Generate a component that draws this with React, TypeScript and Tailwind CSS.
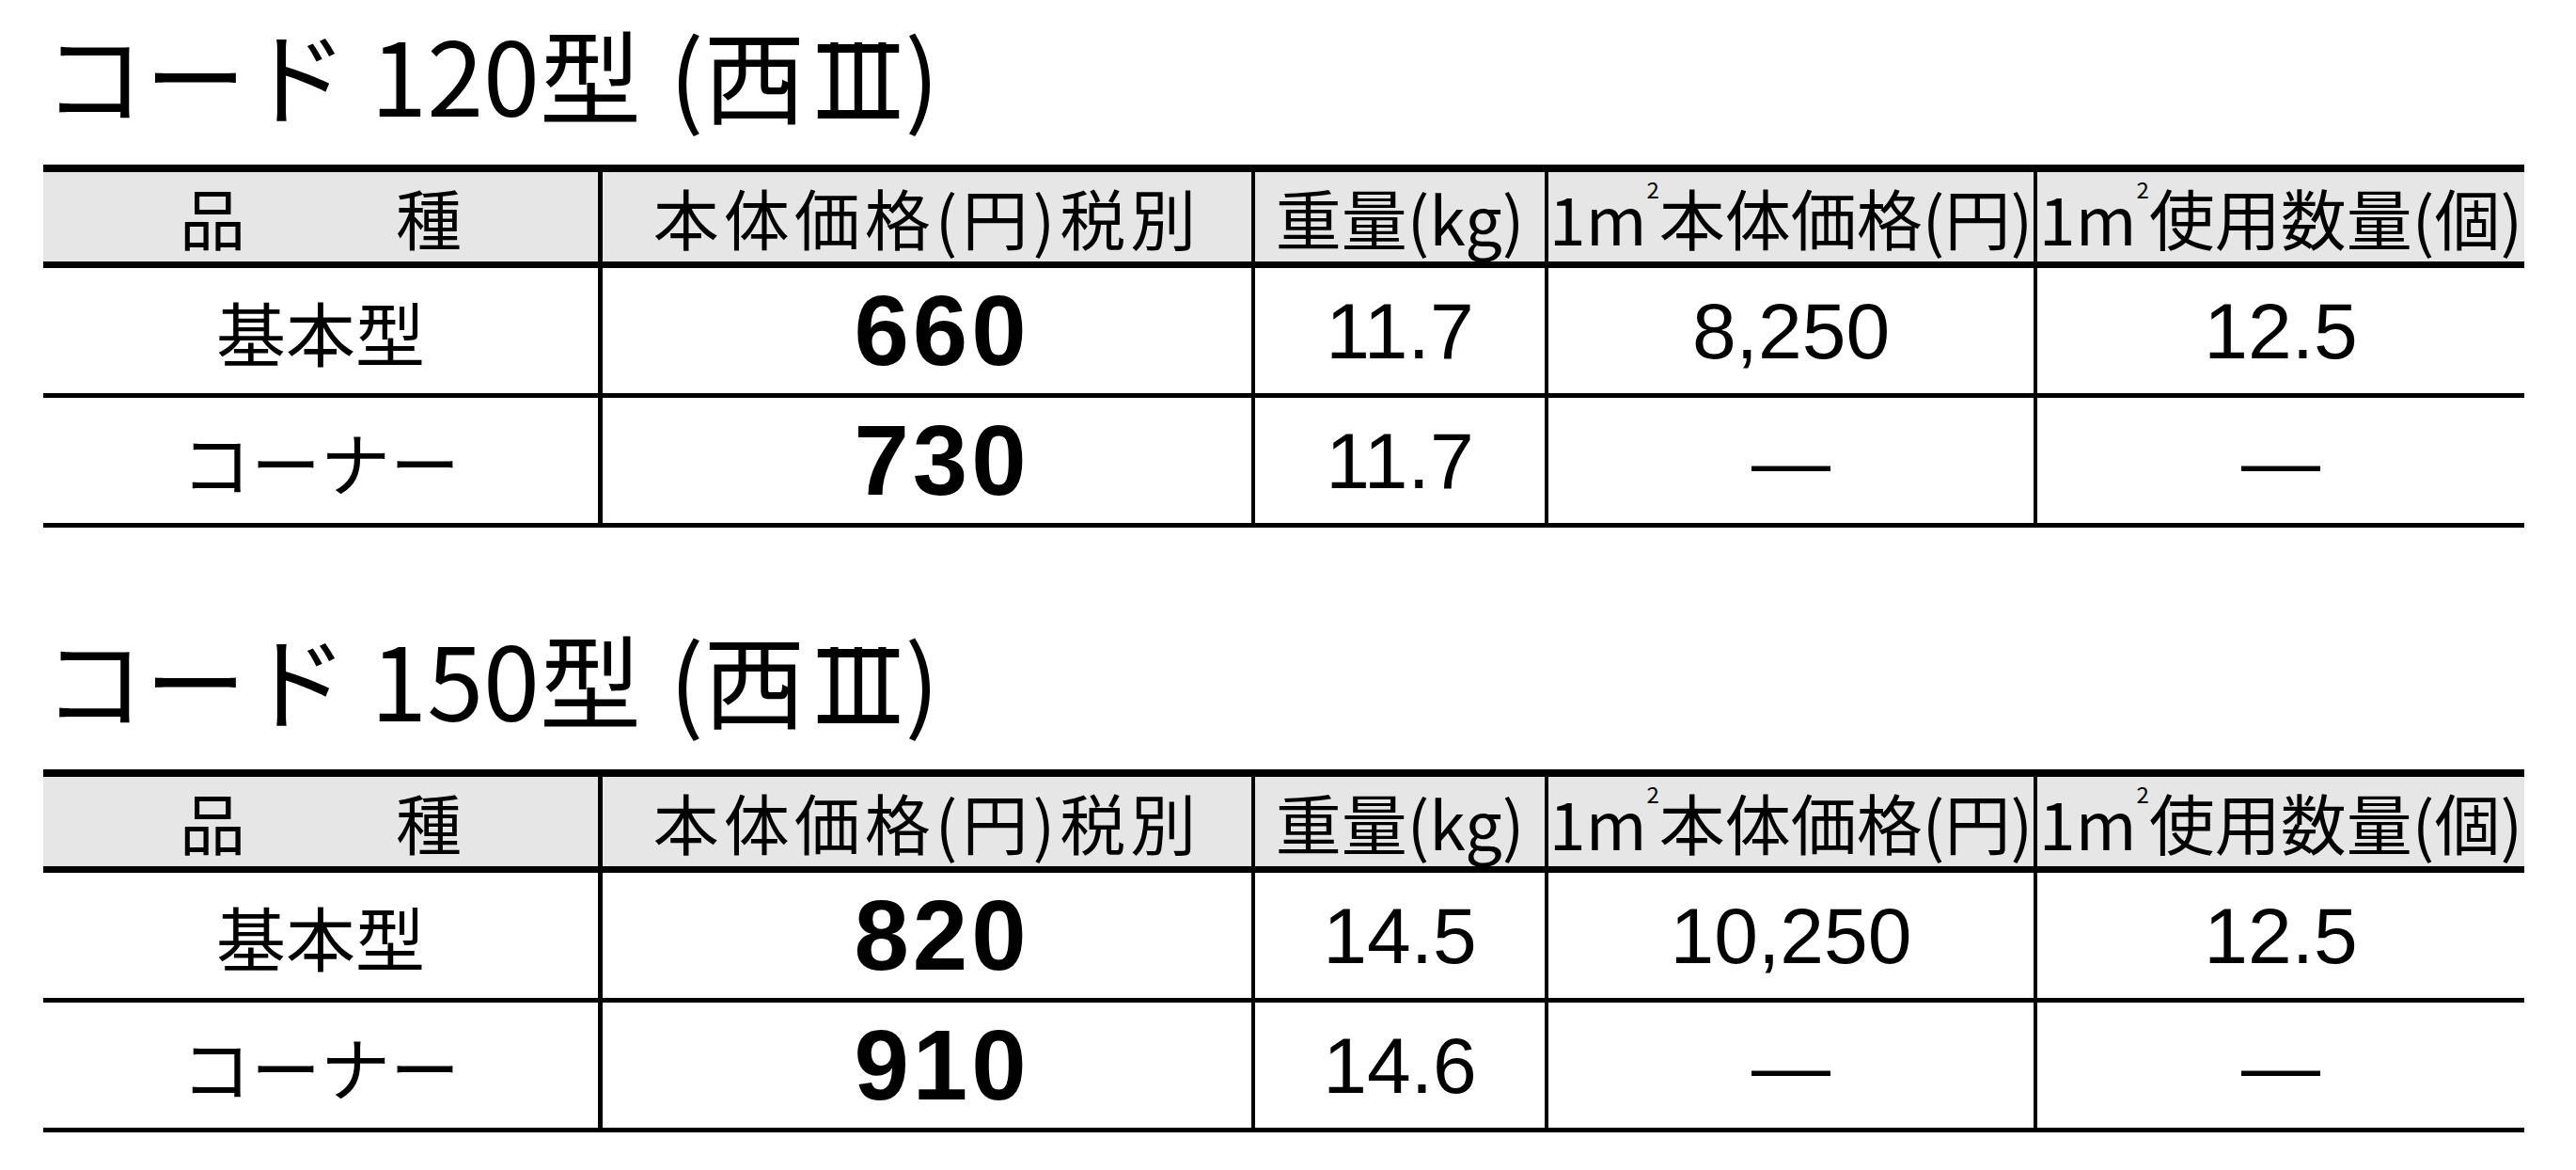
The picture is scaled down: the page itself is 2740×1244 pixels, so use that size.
import React from 'react';

interface PriceTable {
  name: string;
  rows: string[][];
}

const tables: PriceTable[] = [
  {
    name: 'コード 120型',
    rows: [
      ['基本型', '660', '11.7', '8,250', '12.5'],
      ['コーナー', '730', '11.7', '—', '—'],
    ],
  },
  {
    name: 'コード 150型',
    rows: [
      ['基本型', '820', '14.5', '10,250', '12.5'],
      ['コーナー', '910', '14.6', '—', '—'],
    ],
  },
];

const jp = "font-['Noto_Sans_CJK_JP',sans-serif]";
const num = "font-['Liberation_Sans',Arial,sans-serif]";
const grid = 'grid grid-cols-[590px_695px_312px_520px_522px]';

function SquareMeter() {
  return (
    <>
      1m<sup className="text-[24px] -top-[30px]">2</sup>
    </>
  );
}

function Title({ name }: { name: string }) {
  return (
    <h2 className={`h-[108px] text-[108px] leading-none font-normal text-black mb-[44px] whitespace-nowrap ${jp}`}>
      {name}
      <span className="ml-[30px]">(</span>西
      {/* roman numeral with its top and bottom bars */}
      <span className="relative inline-block ml-[2px] -mr-[4px] scale-x-[0.8]">
        Ⅲ
        <span className="absolute left-0 right-0 top-[24px] h-[9px] bg-black" />
        <span className="absolute left-0 right-0 top-[94px] h-[9px] bg-black" />
      </span>
      )
    </h2>
  );
}

function Table({ table }: { table: PriceTable }) {
  return (
    <div className="w-[2639px] border-t-[8px] border-black">
      <div className={`${grid} h-[102px] bg-[#e6e6e6] border-b-[7px] border-black text-[70px] leading-none text-black ${jp}`}>
        <div className="flex items-center justify-center gap-[160px]">
          <span>品</span>
          <span>種</span>
        </div>
        <div className="flex items-center justify-center border-l-[5px] border-black tracking-[5px]">本体価格(円)税別</div>
        <div className="flex items-center justify-center border-l-[4px] border-black">重量(kg)</div>
        <div className="flex items-center justify-center border-l-[4px] border-black">
          <SquareMeter />本体価格(円)
        </div>
        <div className="flex items-center justify-center border-l-[4px] border-black">
          <SquareMeter />使用数量(個)
        </div>
      </div>
      {table.rows.map((row, i) => (
        <div key={i} className={`${grid} h-[138px] border-b-[5px] border-black text-black leading-none`}>
          <div className={`flex items-center justify-center text-[74px] ${jp}`}>{row[0]}</div>
          <div className={`flex items-center justify-center border-l-[5px] border-black pl-[32px] text-[105px] font-bold tracking-[4px] ${num}`}>
            {row[1]}
          </div>
          <div className={`flex items-center justify-center border-l-[4px] border-black text-[84px] ${num}`}>{row[2]}</div>
          <div className={`flex items-center justify-center border-l-[4px] border-black text-[84px] ${num}`}>{row[3]}</div>
          <div className={`flex items-center justify-center border-l-[4px] border-black text-[84px] ${num}`}>{row[4]}</div>
        </div>
      ))}
    </div>
  );
}

export default function App() {
  return (
    <div className="w-[2740px] h-[1244px] bg-white pl-[46px] pt-[23px] overflow-hidden">
      {tables.map((table, i) => (
        <div key={i} className={i > 0 ? 'mt-[105px]' : ''}>
          <Title name={table.name} />
          <Table table={table} />
        </div>
      ))}
    </div>
  );
}
